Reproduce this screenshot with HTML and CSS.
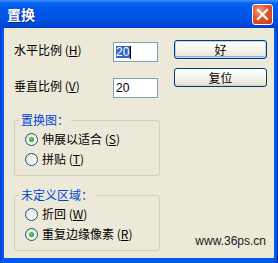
FILE: index.html
```html
<!DOCTYPE html>
<html lang="zh-CN">
<head>
    <meta charset="UTF-8">
    <title>置换</title>
    <link rel="stylesheet" href="styles.css">
</head>
<body>
    <div class="window">
        <div class="titlebar">
            <span class="title">置换</span>
            <span class="close">
                <svg width="13" height="13" viewBox="0 0 13 13">
                    <path d="M2 2 L11 11 M11 2 L2 11" stroke="#fff" stroke-width="2.2" stroke-linecap="square"/>
                </svg>
            </span>
        </div>

        <div class="client">
            <div class="left">
                <div class="row">
                    <label class="label">水平比例 (<u>H</u>)</label>
                    <div class="field"><span class="selected">20</span><span class="caret"></span></div>
                </div>
                <div class="row second">
                    <label class="label">垂直比例 (<u>V</u>)</label>
                    <div class="field">20</div>
                </div>

                <fieldset class="group">
                    <legend>置换图：</legend>
                    <div class="option"><span class="radio checked"></span>伸展以适合 (<u>S</u>)</div>
                    <div class="option"><span class="radio"></span>拼贴 (<u>T</u>)</div>
                </fieldset>

                <fieldset class="group lower">
                    <legend>未定义区域：</legend>
                    <div class="option"><span class="radio"></span>折回 (<u>W</u>)</div>
                    <div class="option"><span class="radio checked"></span>重复边缘像素 (<u>R</u>)</div>
                </fieldset>
            </div>

            <div class="right">
                <button class="btn default">好</button>
                <button class="btn">复位</button>
                <div class="watermark">www.36ps.cn</div>
            </div>
        </div>
    </div>
</body>
</html>
```

FILE: styles.css
```css
body {
    margin: 0;
    padding: 0;
    background: #fff;
    font-family: "Noto Sans CJK SC", "Liberation Sans", sans-serif;
    font-size: 12px;
    color: #000;
}

.window {
    width: 278px;
    height: 263px;
    display: flex;
    flex-direction: column;
    background: linear-gradient(90deg, #0831d9 0, #0058ee 2px, #0058ee 276px, #001ea0 278px);
}

.titlebar {
    height: 28px;
    flex-shrink: 0;
    display: flex;
    align-items: center;
    justify-content: space-between;
    padding: 0 5px 0 7px;
    background: linear-gradient(#3d95ff 0, #0a63f0 3px, #0058ee 8px, #0055e8 60%, #0049da 88%, #003dc4 100%);
}

.title {
    color: #fff;
    font-weight: bold;
    font-size: 14px;
    line-height: 14px;
    text-shadow: 1px 1px 0 #0a1e80;
}

.close {
    width: 19px;
    height: 19px;
    display: flex;
    align-items: center;
    justify-content: center;
    border: 1px solid #fff;
    border-radius: 3px;
    background: radial-gradient(circle at 35% 30%, #f49a7c 0, #e2552f 45%, #c8360f 100%);
    margin-top: 1px;
}

.client {
    flex: 1;
    margin: 0 4px 5px 4px;
    background: #ece9d8;
    display: grid;
    grid-template-columns: 146px 93px;
    column-gap: 14px;
    padding: 0 0 0 10px;
}

.left {
    display: flex;
    flex-direction: column;
}

.row {
    display: flex;
    margin-top: 14px;
}

.row.second {
    margin-top: 16px;
}

.label {
    width: 99px;
    line-height: 12px;
    padding-top: 2px;
}

.field {
    width: 45px;
    height: 20px;
    box-sizing: border-box;
    border: 1px solid #7f9db9;
    background: #fff;
    font-family: "Liberation Sans", sans-serif;
    font-size: 12px;
    line-height: 18px;
    padding-left: 2px;
    display: flex;
    align-items: center;
}

.selected {
    background: #316ac5;
    color: #fff;
    line-height: 12px;
    padding-right: 1px;
}

.caret {
    width: 1px;
    height: 13px;
    background: #000;
}

.group {
    margin: 16px 0 0 0;
    padding: 3px 0 6px 6px;
    border: 1px solid #d0d0bf;
    border-radius: 3px;
}

.group.lower {
    margin-top: 13px;
}

.group legend {
    padding: 0 2px 0 2px;
    margin-left: -2px;
    color: #0046d5;
    line-height: 12px;
}

.option {
    height: 20px;
    display: flex;
    align-items: center;
    line-height: 12px;
}

.radio {
    width: 11px;
    height: 11px;
    border: 1px solid #1c5180;
    border-radius: 50%;
    margin: 0 4px 0 4px;
    background: linear-gradient(135deg, #dcdcd7 0, #f4f4f1 60%, #fff 100%);
    display: flex;
    align-items: center;
    justify-content: center;
}

.radio.checked::after {
    content: "";
    width: 5px;
    height: 5px;
    border-radius: 50%;
    background: radial-gradient(circle at 40% 40%, #5ee05e 0, #21a121 70%);
}

.right {
    display: flex;
    flex-direction: column;
    padding-top: 12px;
    padding-bottom: 10px;
}

.btn {
    height: 19px;
    width: 93px;
    border: 1px solid #003c74;
    border-radius: 3px;
    background: linear-gradient(#ffffff 0, #f4f3ee 50%, #ece9d8 85%, #d6d0c5 100%);
    font-family: "Noto Sans CJK SC", sans-serif;
    font-size: 12px;
    line-height: 12px;
    padding: 0;
    color: #000;
}

.btn + .btn {
    margin-top: 9px;
}

.btn.default {
    box-shadow: inset 0 0 0 1px #bcd4f6, inset 0 -1px 0 1px #89adf4;
}

.watermark {
    margin-top: auto;
    text-align: right;
    padding-right: 1px;
    font-family: "Liberation Sans", Arial, sans-serif;
    font-size: 12px;
    line-height: 14px;
    color: #1a1a1a;
}
```
